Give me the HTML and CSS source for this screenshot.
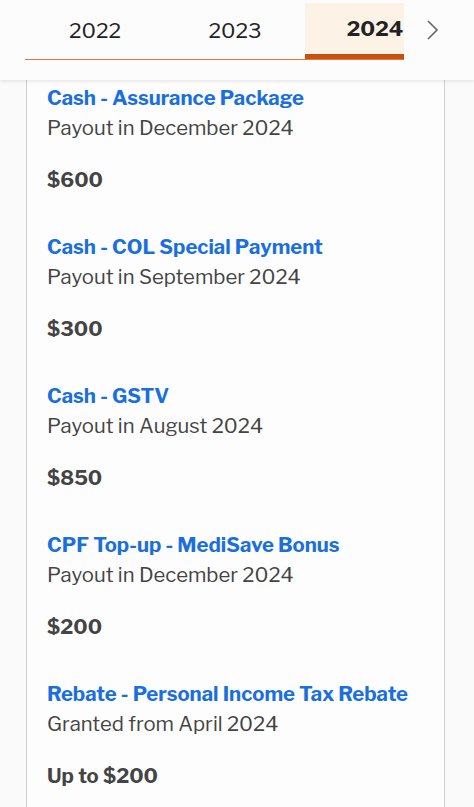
FILE: index.html
```html
<!DOCTYPE html>
<html>

<head>
    <title>Benefits by Year</title>
    <link rel="stylesheet" href="styles.css">
</head>

<body>
    <div class="header">
        <div class="tabs">
            <div class="tab">2022</div>
            <div class="tab">2023</div>
            <div class="tab active">2024</div>
        </div>
        <div class="next">
            <svg width="14" height="22" viewBox="0 0 14 22">
                <path d="M2 2 L11 11 L2 20" fill="none" stroke="#666" stroke-width="1.6" />
            </svg>
        </div>
    </div>

    <div class="card">
        <div class="item">
            <div class="item-title">Cash - Assurance Package</div>
            <div class="item-sub">Payout in December 2024</div>
            <div class="item-amount">$600</div>
        </div>
        <div class="item">
            <div class="item-title">Cash - COL Special Payment</div>
            <div class="item-sub">Payout in September 2024</div>
            <div class="item-amount">$300</div>
        </div>
        <div class="item">
            <div class="item-title">Cash - GSTV</div>
            <div class="item-sub">Payout in August 2024</div>
            <div class="item-amount">$850</div>
        </div>
        <div class="item">
            <div class="item-title">CPF Top-up - MediSave Bonus</div>
            <div class="item-sub">Payout in December 2024</div>
            <div class="item-amount">$200</div>
        </div>
        <div class="item">
            <div class="item-title">Rebate - Personal Income Tax Rebate</div>
            <div class="item-sub">Granted from April 2024</div>
            <div class="item-amount">Up to $200</div>
        </div>
    </div>
</body>

</html>
```

FILE: styles.css
```css
body {
    margin: 0;
    background-color: #fafafa;
    font-family: "Libre Franklin", Inter, "Noto Sans", sans-serif;
    height: 807px;
    overflow: hidden;
}

.header {
    height: 80px;
    background-color: #fcfcfc;
    display: flex;
    box-shadow: 0px 2px 3px rgba(0, 0, 0, 0.08);
    position: relative;
    z-index: 1;
}

.tabs {
    margin-left: 25px;
    width: 379px;
    height: 60px;
    display: flex;
    overflow: hidden;
    border-bottom: 1px solid #e8773e;
    box-sizing: border-box;
}

.tab {
    flex: 0 0 140px;
    display: flex;
    align-items: center;
    justify-content: center;
    padding-top: 2px;
    font-size: 21px;
    color: #222222;
}

.tab.active {
    margin-top: 3px;
    background-color: #fdf2e6;
    border-bottom: 5px solid #c9510f;
    font-weight: bold;
    padding-top: 0;
    padding-right: 2px;
}

.next {
    flex: 1;
    display: flex;
    align-items: center;
    padding-left: 22px;
    padding-bottom: 20px;
}

.card {
    margin: 0 29px 0 26px;
    border-left: 1px solid #cfcfcf;
    border-right: 1px solid #cfcfcf;
    background-color: #fdfdfd;
    padding: 3px 20px 0 20px;
    min-height: 724px;
}

.item {
    margin-bottom: 37px;
}

.item-title {
    font-size: 20.3px;
    line-height: 30px;
    font-weight: bold;
    color: #1a6fdf;
}

.item-sub {
    font-size: 20.3px;
    line-height: 30px;
    color: #444444;
}

.item-amount {
    margin-top: 22px;
    font-size: 20.3px;
    line-height: 30px;
    font-weight: bold;
    color: #444444;
}
```
